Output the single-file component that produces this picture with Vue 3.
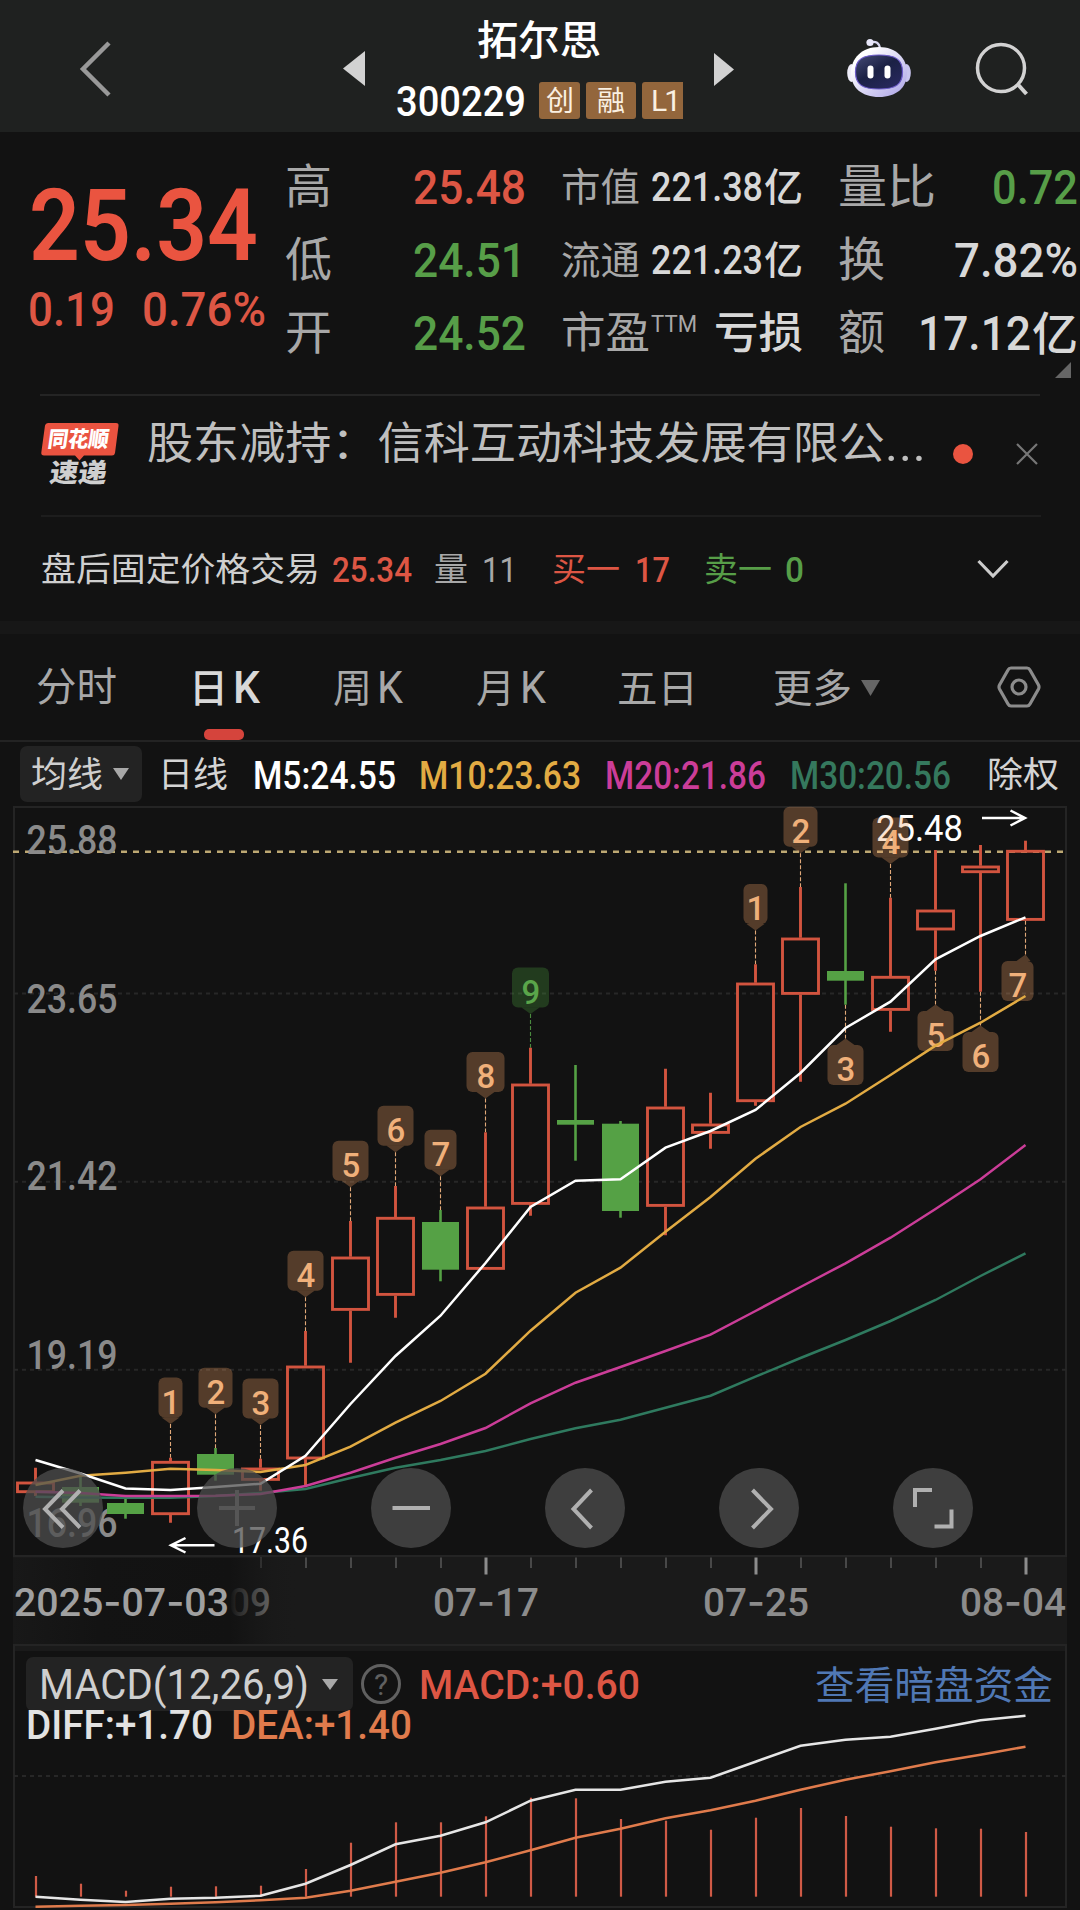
<script setup>
import { h } from 'vue'

// one line of text fitted to a given width
function FitText(props) {
  const size = Number(props.size)
  return h('svg', { width: props.width, height: size, overflow: 'visible', fill: 'currentColor' }, [
    h(
      'text',
      {
        x: 0,
        y: size * 0.86,
        'font-size': size,
        textLength: props.width,
        lengthAdjust: 'spacingAndGlyphs',
      },
      props.text
    ),
  ])
}
FitText.props = ['text', 'width', 'size']

const x = (i) => 35.5 + i * 45

// [up, high, body top, body bottom, low]
const candles = [
  [1, 1467.7, 1481.7, 1493, 1496],
  [0, 1476, 1487, 1502.7, 1506],
  [0, 1499, 1503, 1514, 1518.7],
  [1, 1457.7, 1461, 1515, 1522.7],
  [0, 1448, 1454, 1474.7, 1480.7],
  [1, 1458.7, 1467.7, 1480.7, 1490.7],
  [1, 1331, 1365.7, 1459.3, 1486.7],
  [1, 1221, 1256.7, 1310.7, 1362.7],
  [1, 1186, 1217, 1295.7, 1317.7],
  [0, 1210, 1222, 1269.7, 1281.3],
  [1, 1132.3, 1206.7, 1269.7, 1269.7],
  [1, 1047.7, 1083.7, 1204.7, 1215.7],
  [0, 1065, 1120, 1124.7, 1160.7],
  [0, 1121, 1123.7, 1211, 1217.7],
  [1, 1068.7, 1106.7, 1206.7, 1235.3],
  [1, 1092.7, 1123.7, 1133.7, 1148.7],
  [1, 964.3, 982.7, 1102, 1105.7],
  [1, 887, 937.7, 994.7, 1081.7],
  [0, 883.3, 971, 980.7, 1004.7],
  [1, 897.7, 976, 1010.7, 1031.7],
  [1, 850, 909.7, 930.3, 970.7],
  [1, 845, 865.7, 873, 991.7],
  [1, 840.7, 850, 920.7, 920.7],
].map(([up, high, top, bottom, low], i) => ({ up: up === 1, high, top, bottom, low, x: x(i) }))

const ma5 = [1460, 1473.5, 1488.5, 1490, 1487, 1483.7, 1455.7, 1404, 1356, 1315.7, 1263, 1207, 1180.7, 1179.3, 1147.7, 1131, 1110, 1073, 1028, 1001.7, 959.3, 936, 917.3]
const ma10 = [1485, 1475.7, 1472.7, 1468.7, 1470, 1472, 1465, 1446.7, 1422.7, 1401, 1373.7, 1330.7, 1292.7, 1267.7, 1231.7, 1197, 1158.7, 1127, 1103.7, 1075, 1045.7, 1022.7, 996]
const ma20 = [1491.7, 1493, 1496, 1496, 1495.7, 1494, 1486, 1472.7, 1457.7, 1444, 1428, 1403.3, 1382.7, 1367, 1351, 1334.7, 1311, 1287, 1263.3, 1237.7, 1209, 1179.3, 1145]
const ma30 = [1496.7, 1497.5, 1497.7, 1497.7, 1496, 1493, 1489, 1478, 1467.7, 1460, 1451, 1439, 1428.3, 1419.7, 1407.7, 1395.7, 1376.7, 1358, 1340, 1321, 1300, 1276, 1253.3]
const bars = [1876, 1883.7, 1890.7, 1886.7, 1886.3, 1885.7, 1869, 1842.7, 1822.3, 1822.3, 1816.3, 1797.7, 1798.3, 1819, 1820.7, 1829.7, 1817.7, 1808, 1816, 1826.7, 1828.3, 1828.7, 1832]
const diff = [1896.7, 1899.7, 1902, 1898.7, 1897.7, 1895.7, 1883.7, 1865, 1844.3, 1835.7, 1822.3, 1800.7, 1789.7, 1789.7, 1781.7, 1777.7, 1761.7, 1745.7, 1739.7, 1736.7, 1728.7, 1720.3, 1715.7]
const dea = [1906.7, 1905.7, 1905, 1903.7, 1902.3, 1900.3, 1897.7, 1890.7, 1881.7, 1872.7, 1862.3, 1850.3, 1837.7, 1828.7, 1818.3, 1810.3, 1800.7, 1789.7, 1779.7, 1771.3, 1762.3, 1754.7, 1746.7]

const line = (ys) => ys.map((y, i) => `${x(i)},${y}`).join(' ')

// nine-turn marks: [candle, number, width, below the candle, x shift]
const marks = [
  [3, 1, 24],
  [4, 2, 34],
  [5, 3, 36],
  [6, 4, 36],
  [7, 5, 36],
  [8, 6, 36],
  [9, 7, 32],
  [10, 8, 38],
  [11, 9, 37],
  [16, 1, 24],
  [17, 2, 34],
  [18, 3, 36, true],
  [19, 4, 36],
  [20, 5, 36, true],
  [21, 6, 36, true],
  [22, 7, 32, true, -8],
].map(([i, n, w, below = false, shift = 0]) => {
  const c = candles[i]
  const top = below ? c.low + 40.3 : c.high - 80.3
  return {
    n,
    w,
    top,
    x: x(i),
    cx: x(i) + shift,
    green: n === 9,
    tip: below
      ? `${x(i) - 9},${top} ${x(i)},${top - 6.5} ${x(i) + (shift ? 5 : 9)},${top}`
      : `${x(i) - 9},${top + 40} ${x(i)},${top + 46.5} ${x(i) + 9},${top + 40}`,
    y1: below ? c.low : top + 46.5,
    y2: below ? top - 6.5 : c.high,
  }
})

const prices = [
  ['25.88', 853.7],
  ['23.65', 1012.7],
  ['21.42', 1190],
  ['19.19', 1368.7],
  ['16.96', 1537.3],
]
const ticks = Array.from({ length: 18 }, (_, k) => k + 5)
const dates = [
  { x: 433, a: '07', b: '17' },
  { x: 703, a: '07', b: '25' },
  { x: 960, a: '08', b: '04' },
]
</script>

<template>
  <main class="page">
    <header class="top">
      <svg class="back" width="34" height="60" viewBox="0 0 34 60">
        <path d="M31 4 5 30 31 56" fill="none" stroke="#999" stroke-width="4.5" />
      </svg>
      <svg class="prev" width="22" height="35" viewBox="0 0 22 35"><path d="M22 0V35L0 17.5z" fill="#d2d2d2" /></svg>
      <div class="stock">
        <FitText class="name" text="拓尔思" width="124" size="41" />
        <div class="code-row">
          <FitText class="code" text="300229" width="130" size="42" />
          <span class="tag first"><FitText text="创" width="28" size="28" /></span>
          <span class="tag"><FitText text="融" width="28" size="28" /></span>
          <span class="tag last">L1</span>
        </div>
      </div>
      <svg class="next" width="20" height="33" viewBox="0 0 20 33"><path d="M0 0V33L20 16.5z" fill="#d2d2d2" /></svg>
      <svg class="robot" width="64" height="62" viewBox="0 0 64 62">
        <defs>
          <linearGradient id="shell" x1="0" y1="0" x2="1" y2="1">
            <stop offset="0.2" stop-color="#fff" />
            <stop offset="1" stop-color="#a9a1e6" />
          </linearGradient>
          <linearGradient id="visor" x1="0" y1="0" x2="0.8" y2="1">
            <stop offset="0" stop-color="#454b76" />
            <stop offset="0.5" stop-color="#1b2145" />
            <stop offset="1" stop-color="#28285e" />
          </linearGradient>
        </defs>
        <path d="M23 5.500C29 3.500 32.500 6 33 12" fill="none" stroke="#d8d7ef" stroke-width="2.200" />
        <circle cx="23" cy="5.500" r="3.600" fill="#e7e6f8" />
        <ellipse cx="4.500" cy="36" rx="4.300" ry="9" fill="#eeedf9" />
        <ellipse cx="59.500" cy="36" rx="4.300" ry="9" fill="#c9c5ef" />
        <path d="M32 10C49 10 60 21 60 36C60 51 49 60 32 60C15 60 4 51 4 36C4 21 15 10 32 10z" fill="url(#shell)" />
        <path d="M32 18C48 18 55.500 22 55.500 35C55.500 48 48 52 32 52C16 52 8.500 48 8.500 35C8.500 22 16 18 32 18z" fill="url(#visor)" stroke="#6c5bc9" stroke-width="1.200" />
        <rect x="20.500" y="28.500" width="6" height="13" rx="3" fill="#fff" />
        <rect x="37.500" y="28.500" width="6" height="13" rx="3" fill="#fff" />
      </svg>
      <svg class="search" width="54" height="56" viewBox="0 0 54 56" fill="none" stroke="#d2d2d2" stroke-width="3.500">
        <circle cx="26" cy="27" r="23.500" />
        <path d="M42.500 43 51.500 53" stroke-width="4" />
      </svg>
    </header>

    <section class="quote">
      <div class="price up">
        <FitText class="big" text="25.34" width="229" size="101" />
        <div class="change">
          <FitText text="0.19" width="87" size="49" />
          <FitText text="0.76%" width="124" size="49" />
        </div>
      </div>
      <div class="col c2">
        <div class="cell"><FitText text="高" width="47" size="47" /><FitText class="num up" text="25.48" width="113" size="49" /></div>
        <div class="cell"><FitText text="低" width="47" size="47" /><FitText class="num down" text="24.51" width="113" size="49" /></div>
        <div class="cell"><FitText text="开" width="47" size="47" /><FitText class="num down" text="24.52" width="113" size="49" /></div>
      </div>
      <div class="col c3">
        <div class="cell"><FitText text="市值" width="79" size="39" /><span class="num pair"><FitText text="221.38" width="112" size="40" /><FitText text="亿" width="39" size="39" /></span></div>
        <div class="cell"><FitText text="流通" width="79" size="39" /><span class="num pair"><FitText text="221.23" width="112" size="40" /><FitText text="亿" width="39" size="39" /></span></div>
        <div class="cell"><span class="pair"><FitText text="市盈" width="89" size="43" /><FitText class="ttm" text="TTM" width="46" size="23" /></span><FitText class="num" text="亏损" width="89" size="43" /></div>
      </div>
      <div class="col c4">
        <div class="cell"><FitText text="量比" width="98" size="47" /><FitText class="num down" text="0.72" width="86" size="49" /></div>
        <div class="cell"><FitText text="换" width="47" size="47" /><FitText class="num" text="7.82%" width="124" size="49" /></div>
        <div class="cell"><FitText text="额" width="47" size="47" /><span class="num pair"><FitText text="17.12" width="113" size="49" /><FitText text="亿" width="46" size="46" /></span></div>
      </div>
      <svg class="corner" width="16" height="16"><path d="M16 0V16H0z" fill="#666" /></svg>
    </section>

    <section class="news">
      <div class="brand">
        <svg class="bubble" width="78" height="38" viewBox="0 0 78 38">
          <path d="M7 0H75Q78 0 77.500 3L74 30Q73.500 32.500 71 32.500H43L38.500 37.500 34 32.500H3Q0 32.500.3 29.500L4 2.500Q4.500 0 7 0z" fill="#ea5340" />
        </svg>
        <FitText class="brand-name" text="同花顺" width="61" size="22" />
        <FitText class="brand-sub" text="速递" width="57" size="26" />
      </div>
      <FitText class="headline" text="股东减持：信科互动科技发展有限公" width="738" size="44" />
      <span class="dots">...</span>
      <i class="unread"></i>
      <svg class="close" width="22" height="22" viewBox="0 0 22 22"><path d="M1 1 21 21M21 1 1 21" stroke="#777" stroke-width="2.200" /></svg>
    </section>

    <section class="after">
      <FitText class="after-title" text="盘后固定价格交易" width="279" size="33" />
      <FitText class="num up a1" text="25.34" width="80" size="35" />
      <FitText class="a2" text="量" width="34" size="33" />
      <FitText class="a3" text="11" width="35" size="35" />
      <FitText class="up a4" text="买一" width="68" size="33" />
      <FitText class="num up a5" text="17" width="35" size="35" />
      <FitText class="down a6" text="卖一" width="68" size="33" />
      <FitText class="num down a7" text="0" width="19" size="35" />
      <svg class="fold" width="32" height="20" viewBox="0 0 32 20"><path d="M1.500 2 16 17 30.500 2" fill="none" stroke="#ccc" stroke-width="3.200" /></svg>
    </section>

    <nav class="tabs">
      <FitText class="t1" text="分时" width="81" size="40" />
      <span class="tab t2 active"><FitText text="日" width="39" size="39" /><FitText text="K" width="27" size="44" /><i class="mark"></i></span>
      <span class="tab t3"><FitText text="周" width="39" size="39" /><FitText text="K" width="26" size="44" /></span>
      <span class="tab t4"><FitText text="月" width="39" size="39" /><FitText text="K" width="26" size="44" /></span>
      <FitText class="t5" text="五日" width="81" size="39" />
      <FitText class="t6" text="更多" width="79" size="39" />
      <svg class="more" width="19" height="17"><path d="M0 1H19L9.500 17z" fill="#666" /></svg>
      <svg class="gear" width="44" height="42" viewBox="0 0 44 42" fill="none" stroke="#8c8c8c" stroke-width="3.200">
        <path d="M14 2H30Q32 2 33 4L41.500 19Q42.500 21 41.500 23L33 38Q32 40 30 40H14Q12 40 11 38L2.500 23Q1.500 21 2.500 19L11 4Q12 2 14 2z" />
        <circle cx="22" cy="21" r="7" />
      </svg>
    </nav>

    <section class="ma">
      <span class="select ma-select"><FitText text="均线" width="72" size="35" /><svg width="16" height="12"><path d="M0 0H16L8 12z" fill="#a8a8a8" /></svg></span>
      <FitText class="m0" text="日线" width="70" size="35" />
      <FitText class="num m5" text="M5:24.55" width="143" size="39" />
      <FitText class="num m10" text="M10:23.63" width="162" size="39" />
      <FitText class="num m20" text="M20:21.86" width="161" size="39" />
      <FitText class="num m30" text="M30:20.56" width="161" size="39" />
      <FitText class="m0 right" text="除权" width="72" size="35" />
    </section>

    <section class="chart">
      <svg class="plot" width="1080" height="838" viewBox="0 806 1080 838">
        <defs>
          <linearGradient id="fade">
            <stop offset="0" stop-color="#181818" />
            <stop offset="0.3" stop-color="#131313" />
            <stop offset="0.76" stop-color="#121212" />
            <stop offset="0.79" stop-color="#121212" stop-opacity="0.8" />
            <stop offset="1" stop-color="#1a1a1a" stop-opacity="0" />
          </linearGradient>
        </defs>
        <rect x="14" y="807" width="1052" height="749" fill="none" stroke="#242424" stroke-width="2" />
        <rect x="13" y="1557" width="1054" height="87" fill="#1a1a1a" />
        <line v-for="y in [993.5, 1181.7, 1369.7]" :key="y" x1="14" :y1="y" x2="1066" :y2="y" class="grid" />
        <line x1="13" y1="851.700" x2="1064" y2="851.700" class="last" />
        <g class="axis">
          <text v-for="[t, y] in prices" :key="t" x="26.500" :y="y" textLength="91" lengthAdjust="spacingAndGlyphs">{{ t }}</text>
        </g>

        <g class="peak">
          <text x="876" y="840.700" textLength="87" lengthAdjust="spacingAndGlyphs">25.48</text>
          <path d="M982 818H1024M1010.500 810.500 1025 818 1010.500 825.500" />
          <text x="232" y="1552.700" textLength="76" lengthAdjust="spacingAndGlyphs">17.36</text>
          <path d="M214.500 1545.300H172M185.500 1538 171 1545.300 185.500 1552.500" />
        </g>

        <g v-for="(m, k) in marks" :key="k" class="turn" :class="{ green: m.green }">
          <rect :x="m.cx - m.w / 2" :y="m.top" :width="m.w" height="40" rx="6" />
          <polygon :points="m.tip" />
          <line :x1="m.x" :y1="m.y1" :x2="m.x" :y2="m.y2" />
          <text :x="m.cx + 0.5" :y="m.top + 36.3">{{ m.n }}</text>
        </g>

        <g v-for="c in candles" :key="c.x">
          <template v-if="c.up">
            <path :d="`M${c.x} ${c.high}V${c.top}M${c.x} ${c.bottom}V${c.low}`" class="red" />
            <rect :x="c.x - 18" :y="c.top + 1.3" width="36" :height="c.bottom - c.top - 2.6" class="red" />
          </template>
          <template v-else>
            <path :d="`M${c.x} ${c.high}V${c.low}`" class="green-wick" />
            <rect :x="c.x - 18.5" :y="c.top" width="37" :height="c.bottom - c.top" class="green-body" />
          </template>
        </g>

        <polyline :points="line(ma30)" class="curve" stroke="#2f7a5f" />
        <polyline :points="line(ma20)" class="curve" stroke="#cb3d98" />
        <polyline :points="line(ma10)" class="curve" stroke="#e2ab43" />
        <polyline :points="line(ma5)" class="curve" stroke="#fff" />

        <g class="dates">
          <line v-for="i in ticks" :key="i" :x1="x(i) + 0.5" y1="1557.500" :x2="x(i) + 0.5" :y2="i % 6 === 4 ? 1574.5 : 1568" :class="{ major: i % 6 === 4 }" />
          <text x="229" y="1616.300" textLength="42" lengthAdjust="spacingAndGlyphs">09</text>
          <rect x="13" y="1558" width="285" height="86" fill="url(#fade)" />
          <text x="14" y="1616.300" textLength="215" lengthAdjust="spacingAndGlyphs" class="first-date">2025<tspan class="dash">-</tspan>07<tspan class="dash">-</tspan>03</text>
          <text v-for="d in dates" :key="d.x" :x="d.x" y="1616.300" textLength="106" lengthAdjust="spacingAndGlyphs">{{ d.a }}<tspan class="dash">-</tspan>{{ d.b }}</text>
        </g>
      </svg>

      <div class="tools">
        <button><svg viewBox="0 0 80 80"><path d="M40 22.500 22 41 40 59.500M57 22.500 39 41 57 59.500" /></svg></button>
        <button class="off"><svg viewBox="0 0 80 80"><path d="M22 40H58M40 22V58" /></svg></button>
        <button><svg viewBox="0 0 80 80"><path d="M21.500 40H59" stroke-width="5" /></svg></button>
        <button><svg viewBox="0 0 80 80"><path d="M46.500 22 28.500 41 46.500 60" /></svg></button>
        <button><svg viewBox="0 0 80 80"><path d="M33.500 22 52 41 33.500 60" /></svg></button>
        <button><svg viewBox="0 0 80 80"><path d="M22 39V22H39M41.500 58.500H58.500V41.500" /></svg></button>
      </div>
    </section>

    <section class="macd">
      <div class="macd-head">
        <span class="select macd-select"><FitText text="MACD(12,26,9)" width="270" size="42" /><svg width="16" height="11"><path d="M0 0H16L8 11z" fill="#a8a8a8" /></svg></span>
        <span class="help">?</span>
        <FitText class="up macd-value" text="MACD:+0.60" width="221" size="41" />
        <FitText class="dark-fund" text="查看暗盘资金" width="238" size="39" />
      </div>
      <div class="macd-sub">
        <FitText class="diff" text="DIFF:+1.70" width="187" size="41" />
        <FitText class="dea" text="DEA:+1.40" width="181" size="41" />
      </div>
      <svg class="macd-plot" width="1080" height="266" viewBox="0 1644 1080 266">
        <rect x="14" y="1645" width="1052" height="262" fill="none" stroke="#242424" stroke-width="2" />
        <rect x="15" y="1646" width="1050" height="5" fill="#1a1a1a" />
        <line x1="14" y1="1776" x2="1066" y2="1776" class="grid" />
        <line v-for="(y, i) in bars" :key="i" :x1="x(i) + 0.5" :y1="y" :x2="x(i) + 0.5" y2="1896.700" class="bar" />
        <polyline :points="line(diff)" class="curve" stroke="#e6e6e6" />
        <polyline :points="line(dea)" class="curve" stroke="#e07b4c" />
      </svg>
    </section>
  </main>
</template>

<style>
body {
  background: #121212;
}
</style>

<style scoped>
.page {
  width: 1080px;
  height: 1910px;
  overflow: hidden;
  background: #121212;
  color: #a8a8a8;
  font-family: Roboto, 'Noto Sans CJK SC', sans-serif;
}
svg {
  display: block;
  flex: none;
}
.num {
  color: #d8d8d8;
  font-weight: 500;
}
.up {
  color: #dd5644;
}
.down {
  color: #579e48;
}
.pair {
  display: flex;
  align-items: center;
  gap: 1px;
}

.top {
  height: 132px;
  display: flex;
  align-items: flex-start;
  background: #1f2120;
}
.back {
  margin: 39px 0 0 78px;
}
.prev {
  margin: 51px 0 0 231px;
}
.stock {
  width: 289px;
  margin: 20px 0 0 31px;
}
.name {
  margin-left: 81px;
  color: #fff;
  font-weight: 500;
}
.code-row {
  display: flex;
  align-items: center;
  height: 37px;
  margin-top: 21px;
}
.code {
  color: #fff;
  font-weight: 500;
}
.tag {
  width: 50px;
  height: 37px;
  flex: none;
  display: flex;
  align-items: center;
  justify-content: center;
  margin-left: 6px;
  border-radius: 3px;
  background: #93663c;
  color: #faf0e2;
}
.tag.first {
  width: 41px;
  margin-left: 13px;
}
.tag.last {
  width: 41px;
  padding-left: 4px;
  box-sizing: border-box;
  border-radius: 3px 0 0 3px;
  font-size: 30px;
  letter-spacing: -3px;
  line-height: 37px;
}
.next {
  margin: 53px 0 0 29px;
}
.robot {
  margin: 37px 0 0 113px;
}
.search {
  margin: 41px 0 0 64px;
}

.quote {
  position: relative;
  height: 262px;
  box-sizing: border-box;
  padding-top: 18px;
  display: flex;
}
.price {
  width: 285px;
  padding: 23px 0 0 29px;
  box-sizing: border-box;
  font-weight: 500;
}
.big {
  color: #ea5440;
  font-weight: 600;
}
.change {
  display: flex;
  gap: 27px;
  margin: 10px 0 0 -1px;
}
.c2 {
  width: 241px;
}
.c3 {
  width: 242px;
  margin-left: 35px;
}
.c4 {
  width: 240px;
  margin-left: 35px;
}
.cell {
  height: 73px;
  display: flex;
  align-items: center;
  justify-content: space-between;
}
.ttm {
  margin-top: -18px;
}
.num.up {
  color: #dd5644;
}
.num.down {
  color: #579e48;
}
.corner {
  position: absolute;
  right: 9px;
  bottom: 16px;
}

.news {
  height: 121px;
  box-sizing: border-box;
  margin: 0 40px;
  border-top: 2px solid #242424;
  display: flex;
  align-items: flex-start;
}
.brand {
  position: relative;
  width: 78px;
  height: 66px;
  margin: 27px 0 0 1px;
}
.brand-name {
  position: absolute;
  left: 7px;
  top: 5px;
  color: #fff;
  font-weight: 900;
  transform: skewX(-8deg);
}
.brand-sub {
  position: absolute;
  left: 9px;
  top: 37px;
  color: #cfcfcf;
  font-weight: 900;
  transform: skewX(-8deg);
}
.headline {
  margin: 25px 0 0 28px;
  color: #bfbfbf;
}
.dots {
  width: 40px;
  margin-top: 21px;
  color: #bfbfbf;
  font-size: 49px;
  letter-spacing: 1px;
  line-height: 56px;
}
.unread {
  width: 20px;
  height: 20px;
  margin: 48px 0 0 28px;
  border-radius: 50%;
  background: #ea5440;
}
.close {
  margin: 47px 0 0 43px;
}

.after {
  height: 106px;
  box-sizing: border-box;
  margin: 0 39px 0 41px;
  border-top: 2px solid #1d1d1d;
  display: flex;
  align-items: center;
}
.after-title {
  color: #cfcfcf;
}
.a1 {
  margin-left: 12px;
}
.a2 {
  margin-left: 22px;
}
.a3 {
  margin-left: 14px;
}
.a4 {
  margin-left: 35px;
}
.a5 {
  margin-left: 15px;
}
.a6 {
  margin-left: 34px;
}
.a7 {
  margin-left: 13px;
}
.fold {
  margin-left: 173px;
}

.tabs {
  height: 121px;
  box-sizing: border-box;
  padding-left: 36px;
  border-top: 13px solid #171717;
  border-bottom: 2px solid #232323;
  display: flex;
  align-items: center;
}
.tab {
  position: relative;
  height: 100%;
  display: flex;
  align-items: center;
  gap: 5px;
}
.active {
  color: #d8d8d8;
  font-weight: 500;
}
.mark {
  position: absolute;
  left: 15px;
  bottom: 0;
  width: 40px;
  height: 11px;
  border-radius: 5px;
  background: #d5443c;
}
.t2 {
  margin-left: 72px;
}
.t3 {
  margin-left: 73px;
}
.t4 {
  margin-left: 73px;
}
.t5 {
  margin-left: 71px;
}
.t6 {
  margin-left: 75px;
}
.more {
  margin-left: 9px;
}
.gear {
  margin-left: 117px;
}

.ma {
  height: 64px;
  padding: 0 20px;
  display: flex;
  align-items: center;
}
.select {
  display: flex;
  align-items: center;
  border-radius: 7px;
  background: #232323;
  color: #cfcfcf;
}
.ma-select {
  width: 122px;
  height: 56px;
  box-sizing: border-box;
  padding-left: 11px;
  gap: 10px;
}
.m0 {
  margin-left: 16px;
  color: #d4d4d4;
}
.m5 {
  margin-left: 25px;
  color: #fff;
}
.m10 {
  margin-left: 23px;
  color: #e2ab43;
}
.m20 {
  margin-left: 24px;
  color: #cb3d98;
}
.m30 {
  margin-left: 24px;
  color: #35785d;
}
.m0.right {
  margin-left: 36px;
}

.chart {
  position: relative;
  height: 838px;
}
.grid {
  stroke: #272727;
  stroke-width: 2;
  stroke-dasharray: 4 4;
}
.last {
  stroke: #bda873;
  stroke-width: 2.4;
  stroke-dasharray: 6 6;
}
.axis {
  fill: #8a8a8a;
  font-size: 40px;
  font-weight: 500;
}
.peak text {
  fill: #fff;
  font-size: 36px;
}
.peak path {
  fill: none;
  stroke: #fff;
  stroke-width: 2.5;
}
.turn rect,
.turn polygon {
  fill: #f0a064;
  fill-opacity: 0.3;
}
.turn line {
  stroke: #e0a878;
  stroke-width: 1.1;
  stroke-dasharray: 4 2;
}
.turn text {
  fill: #f0b07a;
  font-size: 33px;
  font-weight: 500;
  text-anchor: middle;
}
.turn.green rect,
.turn.green polygon {
  fill: #4a9a3c;
}
.turn.green line {
  stroke: #4a8a3e;
}
.turn.green text {
  fill: #5aa54a;
}
.red {
  fill: none;
  stroke: #d2543f;
  stroke-width: 2.9;
}
.green-wick {
  stroke: #55a145;
  stroke-width: 2.6;
}
.green-body {
  fill: #55a145;
}
.curve {
  fill: none;
  stroke-width: 2.5;
}
.dates {
  fill: #8c8c8c;
  font-size: 39.5px;
  font-weight: 500;
}
.dash {
  font-family: Inter, sans-serif;
}
.dates line {
  stroke: #484848;
  stroke-width: 2;
}
.dates .major {
  stroke: #8c8c8c;
  stroke-width: 3;
}
.first-date {
  fill: #a0a0a0;
}
.tools {
  position: absolute;
  left: 23px;
  top: 662px;
  display: flex;
  gap: 94px;
}
.tools button {
  width: 80px;
  height: 80px;
  padding: 0;
  border: 0;
  border-radius: 50%;
  background: rgba(78, 78, 78, 0.75);
}
.tools path {
  fill: none;
  stroke: #b0b0b0;
  stroke-width: 4;
}
.tools .off path {
  stroke: #565656;
}

.macd {
  position: relative;
  height: 266px;
}
.macd-plot {
  position: absolute;
  left: 0;
  top: 0;
}
.macd-head,
.macd-sub {
  position: relative;
  z-index: 1;
  display: flex;
  align-items: center;
}
.macd-head {
  height: 54px;
  padding: 13px 0 0 26px;
}
.macd-select {
  width: 327px;
  height: 54px;
  box-sizing: border-box;
  padding-left: 13px;
  gap: 13px;
}
.help {
  width: 40px;
  height: 40px;
  box-sizing: border-box;
  margin-left: 8px;
  border: 3px solid #606060;
  border-radius: 50%;
  color: #606060;
  font-size: 30px;
  line-height: 35px;
  text-align: center;
}
.macd-value {
  margin-left: 18px;
}
.macd-value,
.diff,
.dea {
  font-weight: 500;
}
.dark-fund {
  margin-left: 175px;
  color: #5078b4;
}
.macd-sub {
  height: 34px;
  margin-top: -4px;
  padding-left: 26px;
  gap: 18px;
}
.diff {
  color: #e2e2e2;
}
.dea {
  color: #e07b4c;
}
.bar {
  stroke: #cf5a46;
  stroke-width: 2.2;
}
</style>
